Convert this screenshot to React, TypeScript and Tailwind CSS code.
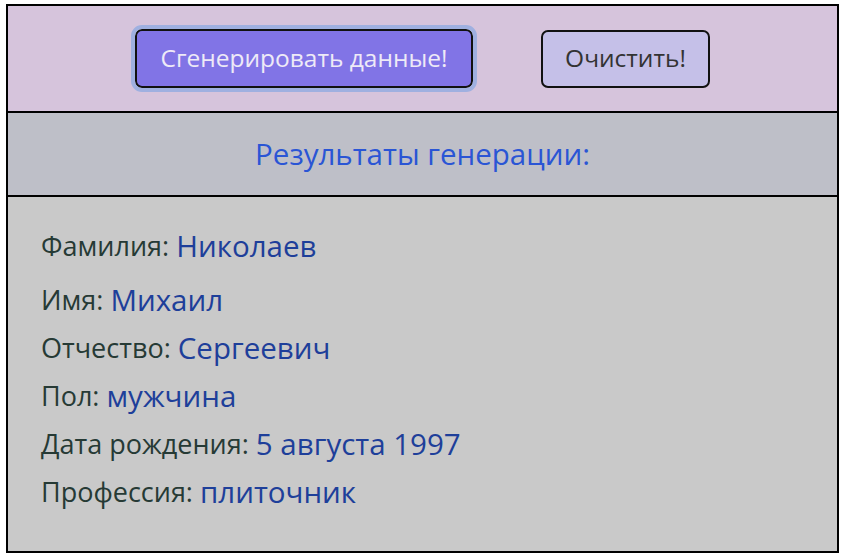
import React from "react";

const rows: [string, string][] = [
  ["Фамилия:", "Николаев"],
  ["Имя:", "Михаил"],
  ["Отчество:", "Сергеевич"],
  ["Пол:", "мужчина"],
  ["Дата рождения:", "5 августа 1997"],
  ["Профессия:", "плиточник"],
];

export default function App() {
  return (
    <div className="w-[848px] h-[559px] bg-white pl-[6px] pt-[4px]" style={{ fontFamily: '"Open Sans", "Noto Sans", sans-serif' }}>
      <div className="w-[833px] h-[549px] border-2 border-black flex flex-col bg-[#c9c9c9]">
        <div className="h-[107px] shrink-0 bg-[#d6c4dc] flex items-center justify-center gap-[68px] border-b-2 border-black">
          <button className="w-[338px] h-[59px] rounded-[7px] border-2 border-[#111] bg-[#8174e6] text-[#eeeaf7] text-[24.5px] outline-[4px] outline-solid outline-[#9fb0e0] outline-offset-0">
            Сгенерировать данные!
          </button>
          <button className="w-[169px] h-[58px] rounded-[7px] border-2 border-[#111] bg-[#c5c0e8] text-[#333] text-[24.5px]">
            Очистить!
          </button>
        </div>
        <div className="h-[84px] shrink-0 bg-[#bebfc8] border-b-2 border-black flex items-center justify-center">
          <span className="text-[29.5px] text-[#2a55d5]">Результаты генерации:</span>
        </div>
        <div className="pl-[33px] pt-[25px]">
          {rows.map(([k, v], i) => (
            <div key={k} className={`h-[48px] flex items-center ${i === 0 ? "mb-[6px]" : ""}`}>
              <span className="text-[27px] text-[#263a35]">{k}&nbsp;</span>
              <span className="text-[29.5px] text-[#1e3f9a]">{v}</span>
            </div>
          ))}
        </div>
      </div>
    </div>
  );
}
